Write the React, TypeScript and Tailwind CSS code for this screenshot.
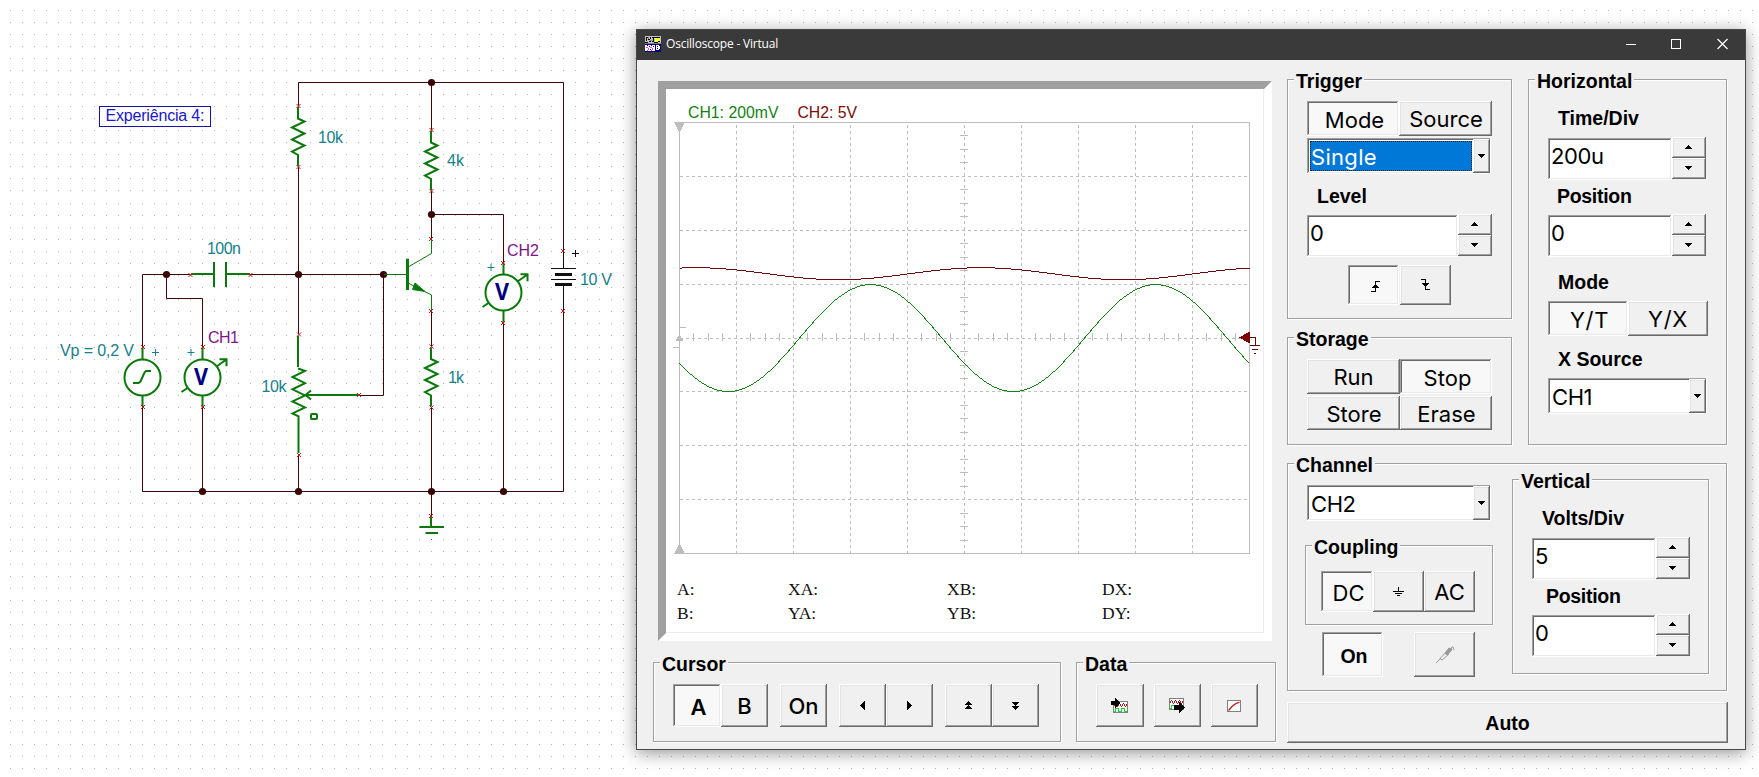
import React from "react";

type Kids = { children?: React.ReactNode };

const RAISED =
  "bg-[#f0f0f0] shadow-[inset_-1px_-1px_0_#696969,inset_1px_1px_0_#ffffff,inset_-2px_-2px_0_#a0a0a0,inset_2px_2px_0_#e3e3e3]";
const PRESSED =
  "bg-[#f8f8f8] shadow-[inset_-1px_-1px_0_#ffffff,inset_1px_1px_0_#a0a0a0,inset_-2px_-2px_0_#e9e9e9,inset_2px_2px_0_#696969]";
const FIELD =
  "bg-white shadow-[inset_-1px_-1px_0_#ffffff,inset_1px_1px_0_#a0a0a0,inset_-2px_-2px_0_#e9e9e9,inset_2px_2px_0_#696969]";
const FACE = "font-['Inter',sans-serif] text-[22px] text-black";
const BOLD =
  "font-['Liberation_Sans',sans-serif] text-[19.5px] font-bold leading-5 text-black";

/* ---------- Schematic ---------- */

function Pin({ x, y }: { x: number; y: number }) {
  return <path d={`M${x - 2} ${y - 2}l4 4M${x + 2} ${y - 2}l-4 4`} stroke="#c81414" strokeWidth="1" fill="none" />;
}

function Resistor({ x, y }: { x: number; y: number }) {
  return (
    <g>
      <path
        d={`M${x - 0.5} ${y + 1}v11.5l6.5 3l-12.5 6l12.5 6l-12.5 6l12.5 6l-12.5 6l6 3.5v11`}
        stroke="#0a780a"
        strokeWidth="2"
        fill="none"
      />
      <Pin x={x} y={y} />
      <Pin x={x} y={y + 61} />
    </g>
  );
}

function Meter({ x, y }: { x: number; y: number }) {
  return (
    <g stroke="#0a780a" strokeWidth="2" fill="none">
      <path d={`M${x} ${y - 30}v12M${x} ${y + 18}v12`} />
      <circle cx={x} cy={y} r="18" fill="#ffffff" />
      <path d={`M${x + 14} ${y - 11}l10 -7M${x + 17} ${y - 18.2}h7v7M${x - 15} ${y + 10.5}l-6 4`} />
      <text
        x={x - 8.5}
        y={y + 7.5}
        textLength="14"
        lengthAdjust="spacingAndGlyphs"
        fontFamily="Open Sans, sans-serif"
        fontWeight="700"
        fontSize="23"
        fill="#000080"
        stroke="none"
      >
        V
      </text>
    </g>
  );
}

function Tag({ x, y, w, c = "#17808a", children }: { x: number; y: number; w: number; c?: string; children: string }) {
  return (
    <text x={x} y={y} textLength={w} fill={c} fontSize="16" fontFamily="Liberation Sans, Arial, sans-serif">
      {children}
    </text>
  );
}

function Dots() {
  const cols = Array.from({ length: 146 }, (_, i) => Math.round(10 + i * 12.016));
  const rows = Array.from({ length: 64 }, (_, i) => Math.round(10 + i * 12.033));
  const d = rows.map((y) => cols.map((x) => `M${x} ${y}h1v1h-1z`).join("")).join("");
  return <path d={d} fill="#b4b4b4" />;
}

function Schematic() {
  const nodes = [
    [166.5, 274.5], [298.5, 274.5], [383.5, 274.5], [431.5, 82.5], [431.5, 214.5],
    [202.5, 491.5], [298.5, 491.5], [431.5, 491.5], [503.5, 491.5],
  ];
  return (
    <svg width="1759" height="777" viewBox="0 0 1759 777" className="block">
      <Dots />
      <g stroke="#3a0606" strokeWidth="1" fill="none">
        <path d="M298.5 106V82.5H563.5V251M563.5 311V491.5H142.5V407" />
        <path d="M142.5 347V274.5H190M166.5 274.5V298.5H202.5V347M202.5 407V491.5" />
        <path d="M250 274.5H383.5V395.5H359M298.5 167V334M298.5 455V491.5" />
        <path d="M431.5 82.5V130M431.5 191V239M431.5 214.5H503.5V263M503.5 323V491.5" />
        <path d="M431.5 311V347M431.5 407V516" />
      </g>
      {nodes.map(([x, y]) => (
        <circle key={`${x}-${y}`} cx={x} cy={y} r="3.6" fill="#3a0606" />
      ))}

      <rect x="99.5" y="106.5" width="111" height="20" fill="#fff" stroke="#1414a8" />
      <Tag x={105.5} y={121} w={99} c="#1818cc">Experiência 4:</Tag>

      <Resistor x={298.5} y={106} />
      <Resistor x={431.5} y={130} />
      <Resistor x={431.5} y={346.5} />

      <path d="M191 274H214M226 274H250M214 262V287M226 262V287" stroke="#0a780a" strokeWidth="2" fill="none" />
      <Pin x={190.5} y={275} />
      <Pin x={250.5} y={275} />

      <path
        d="M298 336V367M298 368.5l7 2.5l-12.5 6l12.5 6.2l-12.5 6.1l12.5 6.1l-12.5 6l12.5 6l-12.5 6l6 3V453M358 395H305M311 390.5l-5.5 4.5l5.5 4.5"
        stroke="#0a780a"
        strokeWidth="2"
        fill="none"
      />
      <rect x="311" y="414" width="6" height="5" rx="1" fill="none" stroke="#0a780a" strokeWidth="2" />
      <Pin x={299} y={334.5} />
      <Pin x={299} y={455} />
      <Pin x={359} y={395} />

      <g stroke="#0a780a" strokeWidth="1" fill="none">
        <path d="M384 274.5H407M431.5 240V253.5L409 266.5M409 283.5L431.5 295V310" />
        <path d="M407.5 258.7V290" strokeWidth="3" />
        <path d="M415 283L425 291.5L412.5 289.5z" fill="#0a780a" />
      </g>
      <Pin x={431} y={239} />
      <Pin x={431} y={311} />

      <g stroke="#0a780a" strokeWidth="2" fill="none">
        <path d="M142.5 348V359M142.5 396V406" />
        <circle cx="142.5" cy="377.5" r="18" fill="#fff" />
        <path d="M133 383H138.5L140.5 381.5L144.5 372.5L146 371H151" />
      </g>
      <Pin x={143} y={347} />
      <Pin x={143} y={407} />

      <Meter x={202.5} y={377.5} />
      <Pin x={203} y={347} />
      <Pin x={203} y={407} />
      <Meter x={503.5} y={292.5} />
      <Pin x={503} y={263} />
      <Pin x={503} y={323} />

      <g stroke="#101010" fill="none">
        <path d="M563.5 252V268M551 268.5H576M551 279.5H576M563.5 286V310M572 253.5h7M575.5 250v7" />
        <path d="M555 274.5H572M555 284.5H572" strokeWidth="3" />
      </g>
      <Pin x={563} y={251} />
      <Pin x={563} y={311} />

      <path d="M431 517V527M419.5 527H444M425.5 533H438" stroke="#0a780a" strokeWidth="2" fill="none" />
      <rect x="431" y="539" width="1" height="1" fill="#0a780a" />
      <Pin x={431} y={516} />

      <path d="M152 352.5h7M155.5 349v7M187.5 352.5h7M191 349v7M487.5 267.5h7M491 264v7" stroke="#17808a" fill="none" />

      <Tag x={318} y={143} w={25}>10k</Tag>
      <Tag x={447} y={166} w={17}>4k</Tag>
      <Tag x={207} y={253.5} w={34}>100n</Tag>
      <Tag x={580} y={285} w={32}>10 V</Tag>
      <Tag x={261.5} y={392} w={25}>10k</Tag>
      <Tag x={448} y={383} w={16}>1k</Tag>
      <Tag x={60} y={356} w={74}>Vp = 0,2 V</Tag>
      <Tag x={507} y={256} w={32} c="#80148a">CH2</Tag>
      <Tag x={208} y={343} w={31} c="#80148a">CH1</Tag>
    </svg>
  );
}

/* ---------- Controls ---------- */

function Group({ title, className, children }: Kids & { title: string; className: string }) {
  return (
    <section
      className={`border border-[#a0a0a0] shadow-[1px_1px_0_#ffffff,inset_1px_1px_0_#ffffff] ${className}`}
    >
      <h2 className={`-mt-[9px] ml-[6px] w-fit bg-[#f0f0f0] px-[2px] ${BOLD}`}>{title}</h2>
      {children}
    </section>
  );
}

function Btn({ on = false, className = "", children }: Kids & { on?: boolean; className?: string }) {
  return (
    <button
      className={`flex shrink-0 items-center justify-center ${FACE} ${on ? PRESSED + " pl-[3px] pt-[3px]" : RAISED} ${className}`}
    >
      {children}
    </button>
  );
}

function Caret({ up = false }: { up?: boolean }) {
  return (
    <svg width="7" height="4" viewBox="0 0 7 4" shapeRendering="crispEdges">
      <path d={up ? "M3 0h1v1h1v1h1v1h1v1h-7v-1h1v-1h1v-1h1z" : "M0 0h7v1h-1v1h-1v1h-1v1h-1v-1h-1v-1h-1v-1h-1z"} />
    </svg>
  );
}

function Spin({ value, className = "", field }: { value: string; className?: string; field: string }) {
  return (
    <div className={`flex h-[43px] items-start ${className}`}>
      <div className={`mt-px h-[42px] pl-[3px] pt-px leading-[35px] tracking-[-0.4px] ${FACE} ${FIELD} ${field}`}>{value}</div>
      <div className="flex h-[42px] w-[34px] flex-col">
        <button className={`flex h-[21px] items-center justify-center pb-px pr-[2px] ${RAISED}`}>
          <Caret up />
        </button>
        <button className={`flex h-[21px] items-center justify-center pb-[2px] pr-[2px] ${RAISED}`}>
          <Caret />
        </button>
      </div>
    </div>
  );
}

function Combo({ value, active = false, className }: { value: string; active?: boolean; className: string }) {
  return (
    <div className={`flex h-[36px] p-[2px] ${FIELD} ${className}`}>
      <div
        className={`flex-1 border font-['Inter',sans-serif] text-[22px] ${
          active
            ? "m-px border-dotted border-[#222] bg-[#0078d7] leading-[30px] tracking-[0.3px] text-white"
            : "border-transparent leading-[32px] pl-px tracking-[-0.4px] text-black"
        }`}
      >
        {value}
      </div>
      <button className={`-my-px -mr-px flex w-[17px] items-center justify-center ${RAISED}`}>
        <Caret />
      </button>
    </div>
  );
}

/* ---------- Scope screen ---------- */

const X0 = 679.5;
const Y0 = 122.5;
const DX = 57;
const DY = 53.9;

function Plot() {
  const xs = Array.from({ length: 571 }, (_, i) => 679 + i);
  const ch1 = xs.map((x) => `${x + 0.5},${Math.round(337.6 - 53.5 * Math.cos((2 * Math.PI * (x - 870.3)) / 285)) + 0.5}`).join(" ");
  const ch2 = xs.map((x) => `${x + 0.5},${Math.round(273.2 + 6 * Math.cos((2 * Math.PI * (x - 838)) / 285)) + 0.5}`).join(" ");
  const quarter = (n: number) => Array.from({ length: n * 4 }, (_, i) => i).filter((i) => i % 4 !== 0);
  return (
    <svg width="597" height="440" viewBox="666 119 597 440" className="block" shapeRendering="crispEdges">
      <g stroke="#bdbdbd" fill="none">
        <g strokeDasharray="3 3">
          {[1, 2, 3, 4, 5, 6, 7, 8, 9].map((i) => (
            <path key={i} d={`M${X0 + i * DX} 125V553`} />
          ))}
          {[1, 2, 3, 4, 5, 6, 7].map((i) => (
            <path key={i} d={`M680 ${Math.floor(Y0 + i * DY - 0.1) + 0.5}H1249`} />
          ))}
        </g>
        {quarter(8).map((i) => (
          <path key={i} d={`M960 ${Math.floor(Y0 + (i * DY) / 4) + 0.5}h8`} />
        ))}
        {quarter(10).map((i) => (
          <path key={i} d={`M${Math.floor(X0 + (i * DX) / 4) + 0.5} 333v8`} />
        ))}
        <rect x={X0} y={Y0} width="570" height="431" />
        <path d="M680 327.5h6M673 347.5h6" />
      </g>
      <path d="M674 122H685L679.5 132.5zM674 554H685L679.5 543zM675.5 341H683.5L679.5 334z" fill="#bdbdbd" />
      <polyline points={ch2} fill="none" stroke="#6e0a0a" />
      <polyline points={ch1} fill="none" stroke="#148214" />
      <path d="M1239 337.5L1249.5 331.5V343.5z" fill="#800000" />
      <path d="M1249 337.5H1255.5V345.5M1250 345.5H1260M1252 349.5H1258M1254 353.5H1256" stroke="#600808" fill="none" />
    </svg>
  );
}

const READOUT = [
  ["A:", "XA:", "XB:", "DX:"],
  ["B:", "YA:", "YB:", "DY:"],
];

function Screen() {
  return (
    <div className="ml-[5px] h-[560px] w-[614px] border-8 border-b-white border-l-[#a0a0a0] border-r-white border-t-[#a0a0a0] bg-white">
      <div className="h-full border-b border-r border-[#ececec]">
        <div className="flex h-[30px] gap-[19px] pl-[22px] pt-[13px] font-['Liberation_Sans',sans-serif] text-[15.8px] leading-[21px]">
          <span className="text-[#148214]">CH1: 200mV</span>
          <span className="text-[#780c0c]">CH2: 5V</span>
        </div>
        <Plot />
        <div className="mt-[18px] font-['Liberation_Serif',serif] text-[17.5px] leading-6 text-[#111]">
          {READOUT.map((row) => (
            <div key={row[0]} className="grid grid-cols-[111px_159px_155px_1fr] pl-[11px]">
              {row.map((t) => (
                <span key={t}>{t}</span>
              ))}
            </div>
          ))}
        </div>
      </div>
    </div>
  );
}

/* ---------- Icons ---------- */

function AppIcon() {
  return (
    <svg width="16" height="16" viewBox="0 0 16 16" shapeRendering="crispEdges">
      <path fill="#c0c0c0" d="M0 0h16v8H0z" />
      <path fill="#000" d="M1 1h2v1H1zM1 2h1v3H1zM3 3h2v1H3zM5 1h1v2H5zM0 6h3v1H0zM4 5h2v1H4zM7 1h1v1H7zM7 5h2v1H7zM8 1h5v1H8zM8 2h1v3H8zM9 6h4v1H9zM13 5h2v1h-2zM11 1h4v1h-4z" />
      <path fill="#ffff30" d="M10 2h5v3h-2v1h-3z" />
      <path fill="#808080" d="M3 1h1v2H3zM5 4h2v1H5zM0 7h16v1H0z" />
      <path fill="#000080" d="M0 8h16v8H0z" />
      <path fill="#fff" d="M0 9h10v6H0zM11 9h4v5h-4z" />
      <path fill="#e040e0" d="M1 11h2v1H1zM3 12h1v2H3zM5 11h2v1H5zM7 12h1v2H7zM2 14h1v1H2zM6 14h1v1H6z" />
      <path fill="#000080" d="M2 9h1v1H2zM4 10h1v1H4zM6 9h1v1H6zM8 10h1v1H8zM12 10h1v1h-1zM14 9h1v1h-1zM12 12h1v1h-1zM14 13h1v1h-1zM5 13h1v1H5z" />
    </svg>
  );
}

function EdgeIcon({ down = false }: { down?: boolean }) {
  return (
    <svg width="9" height="12" viewBox="0 0 9 12" shapeRendering="crispEdges">
      <path
        d={down ? "M0 .5h4.5V10.5H9" : "M0 10.5h4.5V.5H9"}
        stroke="#000"
        fill="none"
      />
      <path d={down ? "M1 4h7v1h-1v1h-1v1h-1v1h-1v-1h-1v-1h-1v-1h-1z" : "M4 3h1v1h1v1h1v1h1v1h-7v-1h1v-1h1v-1h1z"} />
    </svg>
  );
}

function GroundIcon() {
  return (
    <svg width="11" height="10" viewBox="0 0 11 10" shapeRendering="crispEdges">
      <path d="M5.5 0V4M0 4.5H11M2 6.5H9M4 8.5H7" stroke="#000" fill="none" />
    </svg>
  );
}

function ProbeIcon() {
  return (
    <svg width="20" height="18" viewBox="0 0 20 18" fill="none" stroke="#9a9a9a">
      <path d="M1 17L6 12M5 12.5l6.5-7l2.5 2.5l-7 6z" />
      <path d="M10 7L14 2L17 3L16 5L12 9z" fill="#9a9a9a" />
      <path d="M15 3.5L17 1h1l1 3" />
    </svg>
  );
}

function SideArrow({ right = false }: { right?: boolean }) {
  return (
    <svg width="5" height="9" viewBox="0 0 5 9" shapeRendering="crispEdges">
      <path d={right ? "M0 0h1v1h1v1h1v1h1v1h1v1h-1v1h-1v1h-1v1h-1v1h-1z" : "M5 0h-1v1h-1v1h-1v1h-1v1h-1v1h1v1h1v1h1v1h1v1h1z"} />
    </svg>
  );
}

function DoubleArrow({ up = false }: { up?: boolean }) {
  return (
    <svg width="7" height="9" viewBox="0 0 7 9" shapeRendering="crispEdges">
      <g transform={up ? undefined : "matrix(1 0 0 -1 0 9)"}>
        <path d="M3 0h1v1h1v1h1v1h1v1h-3v1h1v1h1v1h1v1h-7v-1h1v-1h1v-1h1v-1h-3v-1h1v-1h1v-1h1z" />
      </g>
    </svg>
  );
}

function WaveBox({ y }: { y: number }) {
  return (
    <g transform={`translate(0 ${y})`}>
      <rect x=".5" y=".5" width="14" height="11" fill="#fff" stroke="#808080" />
      <path d="M1 4.5l1.5-2l2 3l2-3l2 3l2-3l2 3l1.5-2" stroke="#a81818" fill="none" />
      <path d="M1 10.5h1.5v-3h3v3h3v-3h3v3h2.500" stroke="#18d838" fill="none" />
    </g>
  );
}

function ImportIcon() {
  return (
    <svg width="17" height="15" viewBox="-2 0 17 15" shapeRendering="crispEdges">
      <WaveBox y={3} />
      <path d="M-2 3h4v-3l5 5l-5 5v-3h-4z" />
    </svg>
  );
}

function ExportIcon() {
  return (
    <svg width="17" height="15" viewBox="0 0 17 15" shapeRendering="crispEdges">
      <WaveBox y={0} />
      <path d="M5 7h5v-3l6 5.500l-6 5.500v-3h-5z" />
    </svg>
  );
}

function CurveIcon() {
  return (
    <svg width="14" height="12" viewBox="0 0 14 12">
      <rect x=".5" y=".5" width="13" height="11" fill="#fff" stroke="#808080" />
      <path d="M1.500 10.500L5 6.500L8.500 3.800L12.500 2" stroke="#c01818" strokeWidth="1.300" fill="none" />
    </svg>
  );
}

/* ---------- Window ---------- */

function TitleBar() {
  return (
    <header className="flex h-[30px] items-center bg-[#3a3a3a] pb-[2px] pl-[8px] text-white">
      <AppIcon />
      <span className="ml-[5px] flex-1 font-['Open_Sans',sans-serif] text-[12px] leading-[16px] tracking-[-0.2px]">Oscilloscope - Virtual</span>
      <svg width="102" height="12" viewBox="0 0 102 12" fill="none" stroke="#fff" className="mr-[17px]">
        <path d="M0 6.5H10" />
        <rect x="45.500" y="1.500" width="9" height="9" />
        <path d="M91.500 1l10 10M101.500 1l-10 10" strokeWidth="1.200" />
      </svg>
    </header>
  );
}

function LeftPane() {
  return (
    <div className="w-[623px] pt-[21px]">
      <Screen />
      <div className="mt-[21px] flex gap-[15px]">
        <Group title="Cursor" className="h-[80px] w-[408px]">
          <div className="mt-[10px] flex pl-[19px]">
            <Btn on className="h-[43px] w-[48px] font-semibold">A</Btn>
            <Btn className="h-[43px] w-[47px] pt-px font-medium">B</Btn>
            <Btn className="ml-[12px] h-[43px] w-[47px] pt-px font-medium">On</Btn>
            <Btn className="ml-[12px] h-[43px] w-[47px]"><SideArrow /></Btn>
            <Btn className="h-[43px] w-[47px]"><SideArrow right /></Btn>
            <Btn className="ml-[12px] h-[43px] w-[47px]"><DoubleArrow up /></Btn>
            <Btn className="h-[43px] w-[47px]"><DoubleArrow /></Btn>
          </div>
        </Group>
        <Group title="Data" className="h-[80px] w-[200px]">
          <div className="mt-[10px] flex gap-[10px] pl-[19px]">
            <Btn className="h-[43px] w-[48px] pr-px"><ImportIcon /></Btn>
            <Btn className="h-[43px] w-[47px]"><ExportIcon /></Btn>
            <Btn className="h-[43px] w-[47px] pr-px"><CurveIcon /></Btn>
          </div>
        </Group>
      </div>
    </div>
  );
}

function RightPane() {
  return (
    <div className="ml-[11px] w-[441px] pt-[19px]">
      <div className="flex gap-[16px]">
        <div className="flex flex-col gap-[18px]">
          <Group title="Trigger" className="h-[240px] w-[225px]">
            <div className="pl-[19px]">
              <div className="mt-[10px] flex">
                <Btn on className="h-[35px] w-[92px]">Mode</Btn>
                <Btn className="h-[35px] w-[93px] pl-px pt-px">Source</Btn>
              </div>
              <Combo value="Single" active className="mt-[2px] w-[184px]" />
              <div className={`mt-[12px] pl-[10px] ${BOLD}`}>Level</div>
              <Spin value="0" className="mt-[8px]" field="w-[151px]" />
              <div className="mt-[8px] flex pl-[41px]">
                <Btn on className="h-[40px] w-[51px]"><EdgeIcon /></Btn>
                <Btn className="ml-px h-[40px] w-[51px]"><EdgeIcon down /></Btn>
              </div>
            </div>
          </Group>
          <Group title="Storage" className="h-[108px] w-[225px]">
            <div className="mt-[10px] flex pl-[19px]">
              <Btn className="h-[35px] w-[93px] pt-px">Run</Btn>
              <Btn on className="h-[35px] w-[92px]">Stop</Btn>
            </div>
            <div className="mt-[2px] flex pl-[19px]">
              <Btn className="h-[34px] w-[93px] pl-px pt-[3px]">Store</Btn>
              <Btn className="h-[34px] w-[92px] pl-px pt-[3px]">Erase</Btn>
            </div>
          </Group>
        </div>
        <Group title="Horizontal" className="h-[366px] w-[199px]">
          <div className="pl-[19px]">
            <div className={`mt-[17px] pl-[10px] ${BOLD}`}>Time/Div</div>
            <Spin value="200u" className="mt-[9px]" field="w-[124px]" />
            <div className={`mt-[6px] pl-[9px] tracking-[-0.3px] ${BOLD}`}>Position</div>
            <Spin value="0" className="mt-[8px]" field="w-[124px]" />
            <div className={`mt-[15px] pl-[10px] ${BOLD}`}>Mode</div>
            <div className="mt-[9px] flex">
              <Btn on className="h-[35px] w-[80px] tracking-[0.7px]">Y/T</Btn>
              <Btn className="h-[35px] w-[80px] pt-px tracking-[0.7px]">Y/X</Btn>
            </div>
            <div className={`mt-[13px] pl-[10px] ${BOLD}`}>X Source</div>
            <Combo value="CH1" className="mt-[9px] w-[159px]" />
          </div>
        </Group>
      </div>
      <Group title="Channel" className="mt-[18px] h-[228px] w-[440px]">
        <div className="flex pl-[17px]">
          <div className="w-[207px] pt-[10px]">
            <Combo value="CH2" className="ml-[2px] w-[184px]" />
            <Group title="Coupling" className="mt-[24px] h-[80px] w-[188px]">
              <div className="mt-[14px] flex pl-[15px]">
                <Btn on className="h-[41px] w-[52px]">DC</Btn>
                <Btn className="h-[41px] w-[51px]"><GroundIcon /></Btn>
                <Btn className="h-[41px] w-[51px] pt-px">AC</Btn>
              </div>
            </Group>
            <div className="mt-[7px] flex gap-[31px] pl-[17px]">
              <Btn on className="h-[45px] w-[61px]">
                <span className={BOLD}>On</span>
              </Btn>
              <Btn className="h-[45px] w-[61px]"><ProbeIcon /></Btn>
            </div>
          </div>
          <Group title="Vertical" className="mt-[4px] h-[195px] w-[197px]">
            <div className="pl-[19px]">
              <div className={`mt-[17px] pl-[10px] ${BOLD}`}>Volts/Div</div>
              <Spin value="5" className="mt-[9px]" field="w-[124px]" />
              <div className={`mt-[6px] pl-[14px] tracking-[-0.3px] ${BOLD}`}>Position</div>
              <Spin value="0" className="mt-[8px]" field="w-[124px]" />
            </div>
          </Group>
        </div>
      </Group>
      <Btn className="mt-[11px] h-[41px] w-[441px]">
        <span className={BOLD}>Auto</span>
      </Btn>
    </div>
  );
}

export default function App() {
  return (
    <main className="relative h-[777px] w-[1759px] overflow-hidden bg-white">
      <Schematic />
      <div className="absolute left-[636px] top-[29px] h-[721px] w-[1110px] border border-[#484848] bg-[#f0f0f0] shadow-[0_3px_16px_rgba(0,0,0,0.42)]">
        <TitleBar />
        <div className="flex pl-[16px]">
          <LeftPane />
          <RightPane />
        </div>
      </div>
    </main>
  );
}
